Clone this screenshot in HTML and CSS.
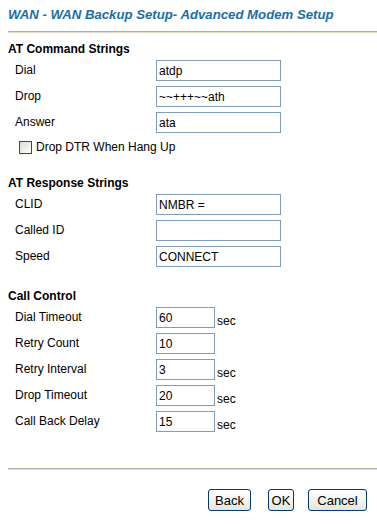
FILE: index.html
```html
<!DOCTYPE html>
<html>
<head>
<meta charset="utf-8">
<link rel="stylesheet" href="styles.css">
</head>
<body>
<div class="page">
  <h1 class="title">WAN - WAN Backup Setup- Advanced Modem Setup</h1>
  <div class="rule"></div>

  <h2 class="heading h-first">AT Command Strings</h2>
  <div class="rows">
    <div class="row"><span class="label">Dial</span><input class="field long" type="text" value="atdp"></div>
    <div class="row"><span class="label">Drop</span><input class="field long" type="text" value="~~+++~~ath"></div>
    <div class="row"><span class="label">Answer</span><input class="field long" type="text" value="ata"></div>
  </div>
  <label class="check-row"><input class="check" type="checkbox"><span>Drop DTR When Hang Up</span></label>

  <h2 class="heading h-second">AT Response Strings</h2>
  <div class="rows">
    <div class="row"><span class="label">CLID</span><input class="field long" type="text" value="NMBR ="></div>
    <div class="row"><span class="label">Called ID</span><input class="field long" type="text" value=""></div>
    <div class="row"><span class="label">Speed</span><input class="field long" type="text" value="CONNECT"></div>
  </div>

  <h2 class="heading h-third">Call Control</h2>
  <div class="rows">
    <div class="row"><span class="label">Dial Timeout</span><input class="field short" type="text" value="60"><span class="unit">sec</span></div>
    <div class="row"><span class="label">Retry Count</span><input class="field short" type="text" value="10"></div>
    <div class="row"><span class="label">Retry Interval</span><input class="field short" type="text" value="3"><span class="unit">sec</span></div>
    <div class="row"><span class="label">Drop Timeout</span><input class="field short" type="text" value="20"><span class="unit">sec</span></div>
    <div class="row"><span class="label">Call Back Delay</span><input class="field short" type="text" value="15"><span class="unit">sec</span></div>
  </div>

  <div class="rule rule-bottom"></div>
  <div class="buttons">
    <button class="btn btn-back" type="button">Back</button>
    <button class="btn btn-ok" type="button">OK</button>
    <button class="btn btn-cancel" type="button">Cancel</button>
  </div>
</div>
</body>
</html>
```

FILE: styles.css
```css
html, body {
  margin: 0;
  padding: 0;
  background: #ffffff;
}

body {
  font-family: "Liberation Sans", Arial, sans-serif;
  font-size: 12px;
  color: #000000;
}

.page {
  padding: 6px 0 0 8px;
}

.title {
  margin: 0;
  font-size: 13.2px;
  line-height: 18px;
  font-weight: bold;
  font-style: italic;
  white-space: nowrap;
  color: #1c6ea4;
}

.rule {
  height: 0;
  border-top: 1px solid #b4b09c;
  border-bottom: 1px solid #dedbcd;
  margin-top: 7px;
}

.heading {
  margin: 0;
  font-size: 12px;
  line-height: 16px;
  font-weight: bold;
}

.h-first { margin-top: 8px; }
.h-second { margin-top: 20px; }
.h-third { margin-top: 21px; }

.rows {
  display: flex;
  flex-direction: column;
  gap: 5px;
  margin-top: 3px;
  padding-left: 7px;
}

.row {
  display: flex;
  align-items: center;
  height: 21px;
}

.label {
  width: 141px;
  line-height: 21px;
}

.field {
  box-sizing: border-box;
  height: 21px;
  margin: 0;
  padding: 0 2px;
  border: 1px solid #7f9db9;
  font-family: "Liberation Sans", Arial, sans-serif;
  font-size: 12px;
  color: #000;
  background: #fff;
  outline: none;
}

.long { width: 125px; }
.short { width: 59px; }

.unit {
  align-self: flex-end;
  line-height: 14px;
  margin-left: 2px;
}

.check-row {
  display: flex;
  align-items: center;
  height: 16px;
  margin-top: 6px;
  padding-left: 11px;
}

.check {
  -webkit-appearance: none;
  appearance: none;
  box-sizing: border-box;
  width: 13px;
  height: 13px;
  margin: 0 4px 0 0;
  border: 1px solid #1c5180;
  background: linear-gradient(135deg, #dcdcd5 0%, #f4f4f0 70%, #ffffff 100%);
}

.rule-bottom {
  margin-top: 36px;
}

.buttons {
  display: flex;
  margin-top: 19px;
  padding-left: 200px;
}

.btn {
  box-sizing: border-box;
  height: 22px;
  margin: 0;
  padding: 0;
  border: 1px solid #003c74;
  border-radius: 3px;
  background: linear-gradient(180deg, #ffffff 0%, #f4f3ee 50%, #e6e4db 100%);
  font-family: "Liberation Sans", Arial, sans-serif;
  font-size: 13px;
  color: #000;
}

.btn-back { width: 43px; }
.btn-ok { width: 26px; margin-left: 17px; }
.btn-cancel { width: 59px; margin-left: 14px; }
```
